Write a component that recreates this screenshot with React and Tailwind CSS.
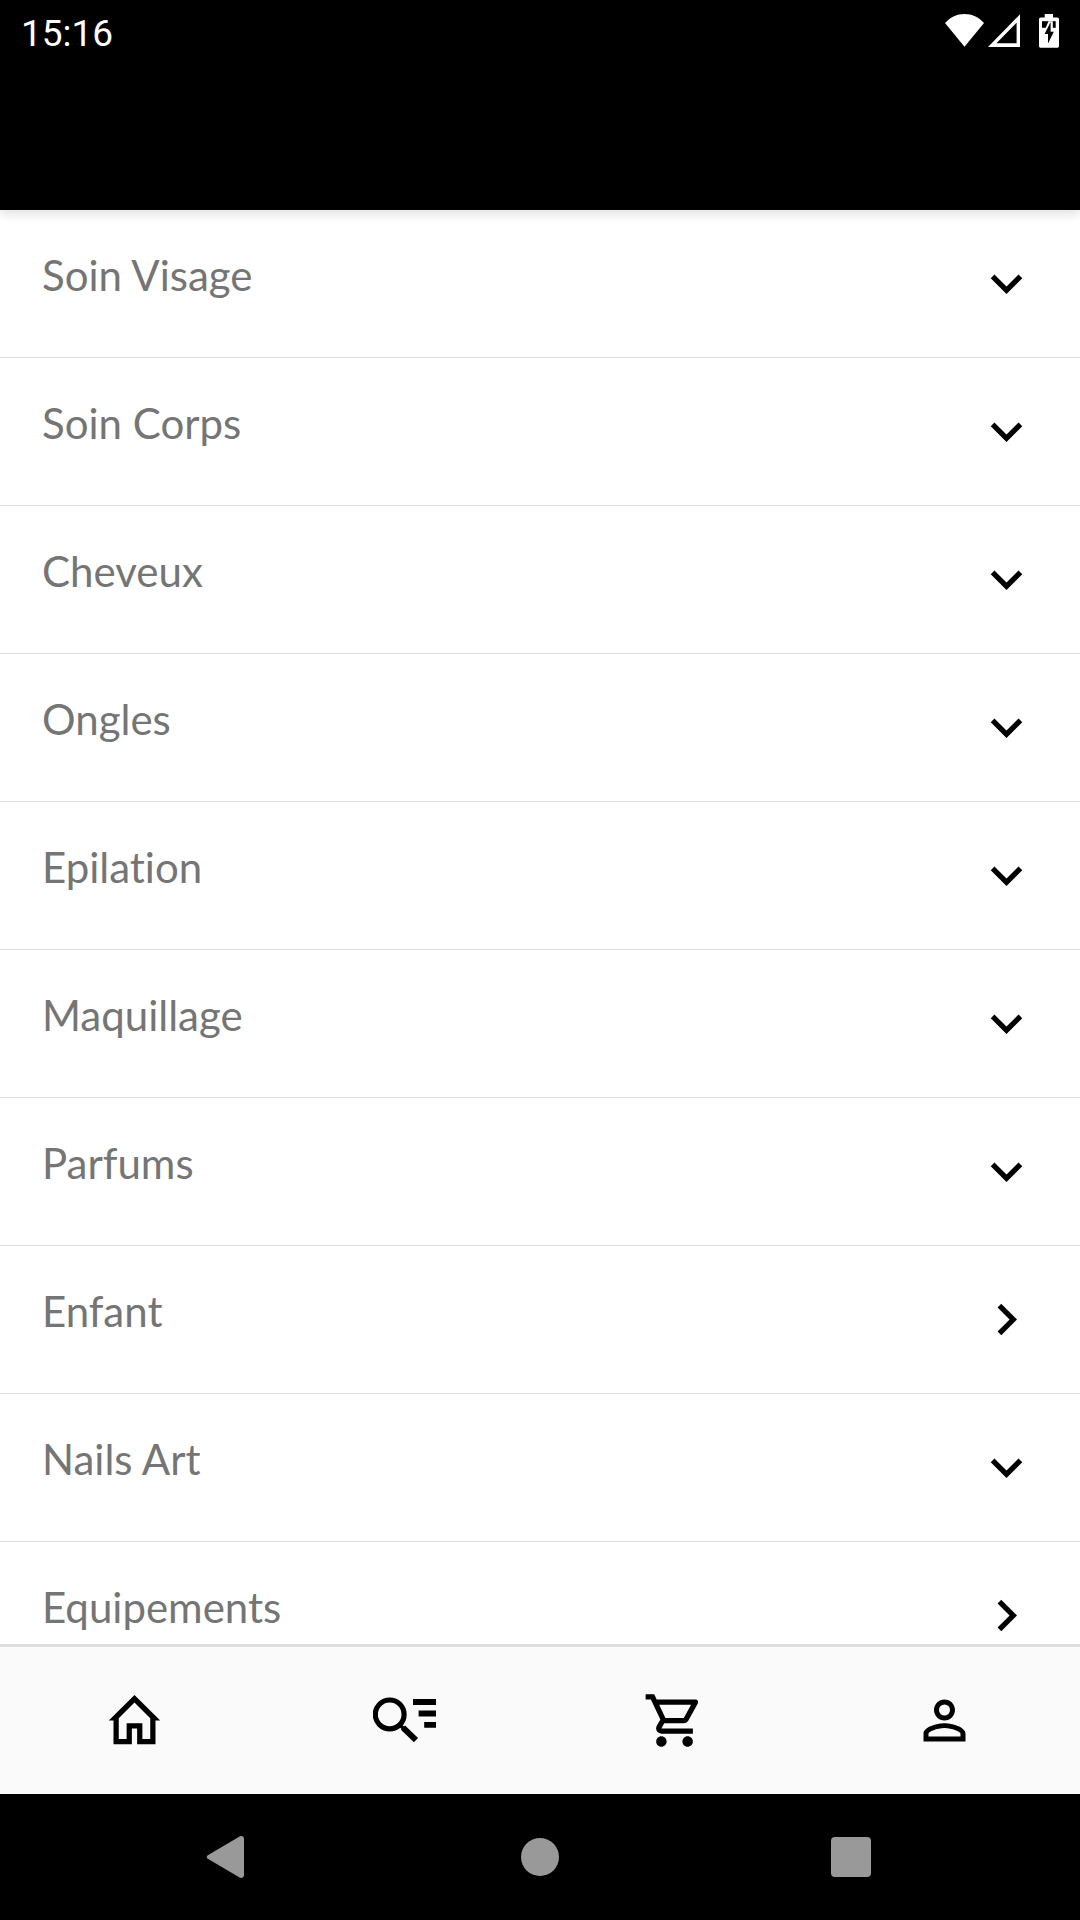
import { useState } from "react";
import { MdChevronRight, MdExpandMore, MdOutlineShoppingCart, MdPersonOutline } from "react-icons/md";

const categories = [
  { name: "Soin Visage", expandable: true },
  { name: "Soin Corps", expandable: true },
  { name: "Cheveux", expandable: true },
  { name: "Ongles", expandable: true },
  { name: "Epilation", expandable: true },
  { name: "Maquillage", expandable: true },
  { name: "Parfums", expandable: true },
  { name: "Enfant", expandable: false },
  { name: "Nails Art", expandable: true },
  { name: "Equipements", expandable: false },
];

const HomeIcon = ({ className }) => (
  <svg viewBox="0 0 24 24" className={className} fill="currentColor" fillRule="evenodd" aria-hidden="true">
    <path d="M12 2.3 2.2 12H4v9h7v-6h2v6h7v-9h1.8zM12 5.1l6 6V19h-3v-6H9v6H6v-7.9z" />
  </svg>
);

const SearchListIcon = ({ className }) => (
  <svg viewBox="0 0 63 63" className={className} fill="none" stroke="currentColor" aria-hidden="true">
    <circle cx="16.7" cy="25.4" r="14.4" strokeWidth="5.2" />
    <path d="M26.5 35.5l4 4" strokeWidth="3.5" />
    <path d="M30 38.6l13 12.6" strokeWidth="6" />
    <path d="M40 13h23M45.6 24.5H63M51.2 35.8H63" strokeWidth="5.8" />
  </svg>
);

const WifiIcon = () => (
  <svg viewBox="0 0 39 34" className="h-[34px] w-[39px]" fill="currentColor" aria-hidden="true">
    <path d="M0 9C5.500 3 12 0 19.500 0S33.500 3 39 9L19.500 32.700z" />
  </svg>
);

const SignalIcon = () => (
  <svg viewBox="0 0 32 34" className="h-[34px] w-8" fill="currentColor" fillRule="evenodd" aria-hidden="true">
    <path d="M32 .3v32.700H0zM28.600 8.800v20.400H8.400z" />
  </svg>
);

const BatteryIcon = () => (
  <svg viewBox="0 0 20 34" className="h-[34px] w-5" aria-hidden="true">
    <path fill="#fff" d="M5.700 0h8.300v3.500h4.200c1 0 1.800.8 1.800 1.800v26.600c0 1-.8 1.800-1.800 1.800H1.800c-1 0-1.800-.8-1.800-1.800V5.300c0-1 .8-1.800 1.800-1.800h3.900z" />
    <path fill="#000" d="M3 7.200h13.700v6.600H3z" />
    <path fill="#fff" d="M9.500 7.200h4.300v9.300h3L9 31.500V21H3.600z" />
    <path fill="#000" d="M11.600 8v9.800h3.200L9 29.400V20H5.600z" />
  </svg>
);

const tabs = [
  { id: "home", label: "Accueil", Icon: HomeIcon },
  { id: "categories", label: "Catégories", Icon: SearchListIcon },
  { id: "cart", label: "Panier", Icon: MdOutlineShoppingCart },
  { id: "account", label: "Compte", Icon: MdPersonOutline },
];

const StatusBar = () => (
  <div className="flex items-start justify-between px-[21px] pt-[14px] text-white">
    <time className="font-['Roboto',sans-serif] text-[37px] leading-[40px]">15:16</time>
    <div className="flex">
      <WifiIcon />
      <div className="ml-1 mr-[19px]">
        <SignalIcon />
      </div>
      <BatteryIcon />
    </div>
  </div>
);

const CategoryRow = ({ name, expandable }) => {
  const Chevron = expandable ? MdExpandMore : MdChevronRight;
  return (
    <li className="border-b border-[#dedede]">
      <button type="button" className="flex w-full items-start justify-between p-[42px] text-left">
        <span className="text-[42px] leading-[46px] text-[#757575] [font-variant-ligatures:none]">{name}</span>
        <Chevron className="size-[63px] shrink-0 text-black" />
      </button>
    </li>
  );
};

const SystemNav = () => (
  <div className="flex h-[126px] shrink-0 bg-black px-[73px] text-[#999]">
    <button type="button" aria-label="Retour" className="flex flex-1 items-center justify-center">
      <svg viewBox="0 0 46 42" className="h-[42px] w-[46px]" fill="currentColor" aria-hidden="true">
        <path d="M1.800 19.200 33.600.5c2-1.100 4.400 0 4.400 2.200v36.600c0 2.200-2.400 3.300-4.400 2.200L1.800 22.800c-1.400-.9-1.400-2.700 0-3.600z" />
      </svg>
    </button>
    <button type="button" aria-label="Écran d'accueil" className="flex flex-1 items-center justify-center">
      <span className="size-[38px] rounded-full bg-current" />
    </button>
    <button type="button" aria-label="Applications récentes" className="flex flex-1 items-center justify-center">
      <span className="size-10 rounded bg-current" />
    </button>
  </div>
);

const App = () => {
  const [activeTab, setActiveTab] = useState("categories");

  return (
    <div className="flex h-screen flex-col bg-white font-['Lato',sans-serif]">
      <header className="relative z-10 h-[210px] shrink-0 bg-black shadow-[0_4px_10px_rgba(0,0,0,0.12)]">
        <StatusBar />
      </header>

      <main className="min-h-0 flex-1 overflow-y-auto [scrollbar-width:none]">
        <ul>
          {categories.map((c) => (
            <CategoryRow key={c.name} name={c.name} expandable={c.expandable} />
          ))}
        </ul>
      </main>

      <nav className="flex h-[150px] shrink-0 border-t-3 border-[#dedede] bg-[#fafafa]">
        {tabs.map(({ id, label, Icon }) => (
          <button
            key={id}
            type="button"
            aria-label={label}
            aria-pressed={activeTab === id}
            onClick={() => setActiveTab(id)}
            className="flex flex-1 items-center justify-center pr-px text-black"
          >
            <Icon className="size-[63px]" />
          </button>
        ))}
      </nav>

      <SystemNav />
    </div>
  );
};

export default App;
